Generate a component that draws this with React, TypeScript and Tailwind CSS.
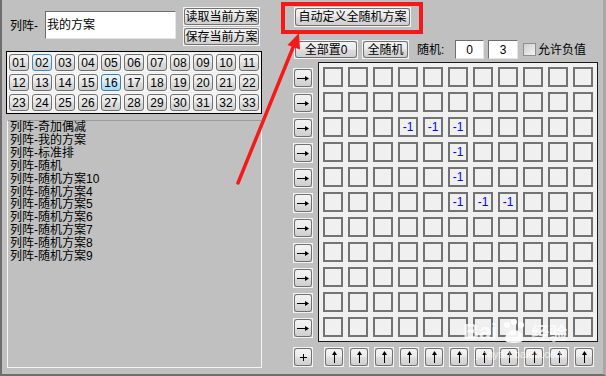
import React from "react";

const nums = Array.from({ length: 33 }, (_, i) => String(i + 1).padStart(2, "0"));

const schemes = [
  "列阵-奇加偶减",
  "列阵-我的方案",
  "列阵-标准排",
  "列阵-随机",
  "列阵-随机方案10",
  "列阵-随机方案4",
  "列阵-随机方案5",
  "列阵-随机方案6",
  "列阵-随机方案7",
  "列阵-随机方案8",
  "列阵-随机方案9",
];

// cells holding a value, row-col
const values: Record<string, string> = {
  "2-3": "-1",
  "2-4": "-1",
  "2-5": "-1",
  "3-5": "-1",
  "4-5": "-1",
  "5-5": "-1",
  "5-6": "-1",
  "5-7": "-1",
};

const face =
  "bg-[linear-gradient(#f3f3f3,#ebebeb_45%,#dddddd_55%,#cfcfcf)] border border-[#707070] rounded-[3px]";

const Btn = ({ className, children }: { className: string; children: React.ReactNode }) => (
  <div className={`flex border border-[#f3f3f3] ${className}`}>
    <div className={`flex flex-1 items-center justify-center ${face}`}>{children}</div>
  </div>
);

const ArrowRight = () => (
  <svg width="12" height="7" viewBox="0 0 12 7">
    <path d="M0 3.5H9" stroke="#000" strokeWidth="1" />
    <path d="M8 1L12 3.5L8 6Z" fill="#000" />
  </svg>
);

const ArrowUp = () => (
  <svg width="7" height="12" viewBox="0 0 7 12">
    <path d="M3.5 3V12" stroke="#000" strokeWidth="1" />
    <path d="M1 4L3.5 0L6 4Z" fill="#000" />
  </svg>
);

const Plus = () => (
  <svg width="7" height="7" viewBox="0 0 7 7">
    <path d="M3.5 0V7M0 3.5H7" stroke="#000" strokeWidth="1" />
  </svg>
);

const NumBtn = ({ n }: { n: string }) => {
  let inner = face;
  if (n === "02")
    inner =
      "bg-[linear-gradient(#f3f3f3,#ebebeb_45%,#dddddd_55%,#cfcfcf)] border border-[#2f8fd8] rounded-[3px]";
  if (n === "16")
    inner =
      "bg-[linear-gradient(#eaf6fd,#d9f0fc_45%,#bee6fd_55%,#a7d9f5)] border border-[#3c7fb1] rounded-[3px]";
  return (
    <div className="flex w-[22px] h-[19px] border border-[#f6f6f6]">
      <div className={`flex flex-1 items-center justify-center text-[12px] leading-none ${inner}`}>{n}</div>
    </div>
  );
};

export default function App() {
  return (
    <div className="relative flex w-[606px] h-[376px] bg-[#c0c0c0] border-l-2 border-b-2 border-r-[3px] border-l-[#6e6e6e] border-b-[#6e6e6e] border-r-[#a9a9a9] text-black font-['Liberation_Sans','Noto_Sans_CJK_SC',sans-serif] overflow-hidden">
      {/* left side */}
      <div className="flex flex-col ml-[4px] w-[256px]">
        <div className="flex h-[51px] items-start">
          <div className="mt-[18px] ml-[4px] w-[35px] text-[12px] leading-[16px]">列阵-</div>
          <div className="mt-[11px] flex items-center w-[131px] h-[28px] bg-white border border-t-[#6f6f6f] border-l-[#6f6f6f] border-r-[#e4e4e4] border-b-[#e4e4e4] pl-[1px] text-[12px]">
            我的方案
          </div>
          <div className="mt-[7px] ml-[7px] flex flex-col gap-px">
            <Btn className="w-[77px] h-[19px] text-[12px]">读取当前方案</Btn>
            <Btn className="w-[77px] h-[19px] text-[12px]">保存当前方案</Btn>
          </div>
        </div>

        <div className="w-[256px] h-[63px] border border-black bg-[#f0f0f0] p-px">
          <div className="grid grid-cols-11 gap-px">
            {nums.map((n) => (
              <NumBtn key={n} n={n} />
            ))}
          </div>
        </div>

        <div className="mt-[6px] ml-[1px] w-[255px] h-[248px] border border-[#f4f4f4] border-t-[#9a9a9a] pl-[2px] text-[12px] leading-[12.9px]">
          {schemes.map((s) => (
            <div key={s}>{s}</div>
          ))}
        </div>
      </div>

      {/* right side */}
      <div className="flex flex-col ml-[31px] pt-[7px]">
        <Btn className="ml-[1px] w-[117px] h-[20px] text-[12px]">自动定义全随机方案</Btn>

        <div className="flex items-center mt-[13px] h-[19px] text-[12px]">
          <Btn className="ml-[1px] w-[64px] h-[19px]">全部置0</Btn>
          <Btn className="ml-[4px] w-[47px] h-[19px]">全随机</Btn>
          <div className="ml-[8px] w-[38px]">随机:</div>
          <div className="flex items-center justify-center w-[29px] h-[19px] bg-white border border-t-[#6f6f6f] border-l-[#6f6f6f] border-r-[#e4e4e4] border-b-[#e4e4e4]">
            0
          </div>
          <div className="ml-[4px] flex items-center justify-center w-[30px] h-[19px] bg-white border border-t-[#6f6f6f] border-l-[#6f6f6f] border-r-[#e4e4e4] border-b-[#e4e4e4]">
            3
          </div>
          <div className="ml-[5px] w-[13px] h-[13px] border border-[#8e8f8f] bg-[linear-gradient(135deg,#cfcfcf,#f4f4f4)]" />
          <div className="ml-[2px]">允许负值</div>
        </div>

        <div className="flex mt-[3px]">
          <div className="flex flex-col gap-[5px] pt-[6px]">
            {Array.from({ length: 11 }, (_, r) => (
              <Btn key={r} className="w-[20px] h-[20px]">
                <ArrowRight />
              </Btn>
            ))}
          </div>
          <div className="ml-[5px] w-[280px] h-[280px] border border-[#1a1a1a] bg-[#f0f0f0] p-[4px]">
            <div className="grid grid-cols-11 gap-[5px]">
              {Array.from({ length: 121 }, (_, i) => {
                const r = Math.floor(i / 11);
                const c = i % 11;
                const v = values[`${r}-${c}`];
                return (
                  <div
                    key={i}
                    className="flex items-center justify-center w-[20px] h-[20px] border-2 border-[#737373] text-[12px] text-[#0000ff] leading-none"
                  >
                    {v}
                  </div>
                );
              })}
            </div>
          </div>
        </div>

        <div className="flex mt-[5px]">
          <Btn className="w-[20px] h-[20px]">
            <Plus />
          </Btn>
          <div className="flex ml-[11px] gap-[5px]">
            {Array.from({ length: 11 }, (_, c) => (
              <Btn key={c} className="w-[20px] h-[20px]">
                <ArrowUp />
              </Btn>
            ))}
          </div>
        </div>
      </div>

      {/* red annotation */}
      <div className="absolute left-[279px] top-[2px] w-[142px] h-[32px] border-4 border-[#f51a1a]" />
      <svg className="absolute left-[-2px] top-0 pointer-events-none" width="606" height="376" viewBox="0 0 606 376">
        <path d="M238 183L294 45" stroke="#f51a1a" strokeWidth="3.5" strokeLinecap="round" />
        <path d="M299 33L287.5 45L300 49.5Z" fill="#f51a1a" />
      </svg>

      {/* watermark */}
      <div className="absolute left-[461px] top-[318px] flex items-center gap-[2px] text-white/75 pointer-events-none">
        <span className="text-[22px] font-bold leading-none">Bai</span>
        <svg width="30" height="28" viewBox="0 0 30 28" className="opacity-90">
          <circle cx="8" cy="7" r="3" fill="#fff" />
          <circle cx="15" cy="4" r="3" fill="#fff" />
          <circle cx="22" cy="7" r="3" fill="#fff" />
          <path d="M6 22C6 15 11 12 15 12C19 12 24 15 24 22C24 26 6 26 6 22Z" fill="#fff" />
        </svg>
        <span className="text-[18px] font-bold leading-none font-['Noto_Sans_CJK_SC',sans-serif]">经验</span>
      </div>
      <div className="absolute left-[474px] top-[349px] text-[11px] text-white/65 leading-none pointer-events-none">
        jingyan.baidu.com
      </div>
    </div>
  );
}
